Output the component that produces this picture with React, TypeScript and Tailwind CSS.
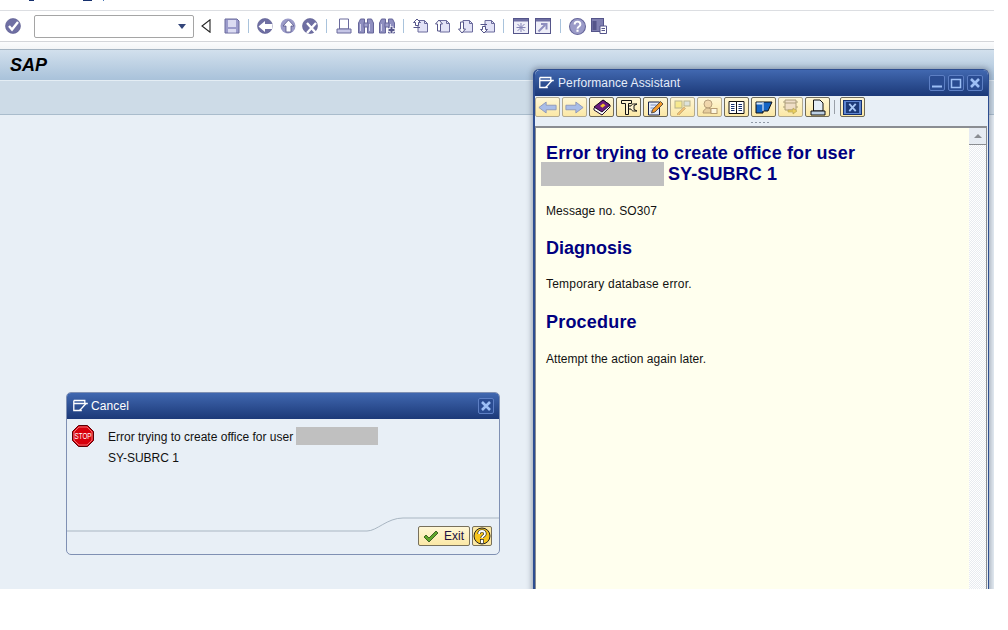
import type { ReactNode } from "react";

const Sep = ({ ml, mr }: { ml: string; mr: string }) => (
  <div className={`w-px h-[14px] bg-[#a9c3dc] ${ml} ${mr}`} />
);

// toolbar glyphs, all on a 16x16 grid
const Ico = ({ children, className = "" }: { children: ReactNode; className?: string }) => (
  <svg viewBox="0 0 16 16" className={`w-4 h-4 shrink-0 ${className}`}>{children}</svg>
);

const Disc = () => <circle cx="8" cy="8" r="7.500" fill="#6f6fa3" stroke="#5a5a8e" strokeWidth="0.600" />;

const PageShape = () => (
  <>
    <path d="M5 2.500h6.500l3 3v8.500H5z" fill="#e2e2f6" stroke="#6a6a9c" />
    <path d="M11.500 2.500v3h3" fill="none" stroke="#6a6a9c" />
  </>
);

const Binoculars = () => (
  <>
    <path d="M.5 15V5l2-4h4v14zM9.500 15V1h4l2 4v10z" fill="#8f8fc0" stroke="#66669a" />
    <rect x="6" y="5" width="4" height="4" fill="#a5a5d0" stroke="#66669a" />
    <path d="M2.500 6v7M11.500 6v7" stroke="#d8d8ee" />
  </>
);

function ArrowBtn({ flip }: { flip?: boolean }) {
  return (
    <svg viewBox="0 0 21 14" className="w-[19px] h-[13px]">
      <path
        d={flip ? "M1 4.500h11V1l8 6-8 6V9.500H1z" : "M20 4.500H9V1L1 7l8 6V9.500h11z"}
        fill="#a9bde8"
        stroke="#8c96b8"
      />
    </svg>
  );
}

const PaBtn = ({ children, dim }: { children: ReactNode; dim?: boolean }) => (
  <div
    className={`w-[25px] h-5 flex items-center justify-center rounded-[2px] border bg-gradient-to-b from-[#fff7d6] to-[#fbe8a6] ${
      dim ? "border-[#b3aa90]" : "border-[#6f6a58]"
    }`}
  >
    {children}
  </div>
);

const WinIcon = () => (
  <svg viewBox="0 0 16 14" className="w-4 h-[14px] shrink-0">
    <path d="M.8 1.500h11v3h3M.8 1.500v10h8M.8 4.500h14" fill="none" stroke="#fff" strokeWidth="1.300" />
    <path d="M6.500 11.500l2-2 4.500-5" fill="none" stroke="#fff" strokeWidth="1.300" />
  </svg>
);

const TitleBtn = ({ children }: { children: ReactNode }) => (
  <div className="w-4 h-4 rounded-[2px] border border-[#5d7fc4] bg-[#2a4c92] flex items-center justify-center">
    <svg viewBox="0 0 12 12" className="w-3 h-3">{children}</svg>
  </div>
);

const CloseMark = () => <path d="M2 2l8 8M10 2l-8 8" stroke="#9dbff5" strokeWidth="2.600" />;

function MainToolbar() {
  return (
    <div className="h-[31px] border-b border-[#d4d6da] bg-white flex items-center">
      <Ico className="ml-[5px]">
        <Disc />
        <path d="M4 8l3 3.500L13 4" fill="none" stroke="#fff" strokeWidth="2.400" />
      </Ico>
      <div className="ml-[13px] w-[160px] h-[23px] rounded-[2px] border border-[#a5a5a5] bg-white flex items-center justify-end pr-[7px]">
        <div className="w-0 h-0 border-x-[4px] border-x-transparent border-t-[5px] border-t-[#33457a]" />
      </div>
      <svg viewBox="0 0 10 14" className="ml-[7px] w-[10px] h-[14px]">
        <path d="M9 .8v12.400L1 7z" fill="#fff" stroke="#222" strokeWidth="1.100" />
      </svg>
      <Ico className="ml-[13px]">
        <path d="M1 1h12l2 2v12H1z" fill="#9c9ccc" stroke="#6a6a9c" />
        <rect x="4" y="2" width="8" height="7" fill="#dcdcf2" />
        <rect x="4" y="11" width="8" height="3.500" fill="#dcdcf2" />
      </Ico>
      <Sep ml="ml-[8px]" mr="mr-[8px]" />
      <Ico>
        <Disc />
        <path d="M1.500 8.500L8 3v3h7.500v5H8v3z" fill="#fff" />
      </Ico>
      <Ico className="ml-[7px]">
        <circle cx="8" cy="8" r="7.500" fill="#9b9bc8" />
        <path d="M8.500 2l5.500 6h-3v6H6V8H3z" fill="#fff" stroke="#55558a" strokeWidth="0.800" />
      </Ico>
      <Ico className="ml-[6px]">
        <Disc />
        <path d="M5 5l9 10M14 5L5 15" stroke="#fff" strokeWidth="2.400" />
      </Ico>
      <Sep ml="ml-[8px]" mr="mr-[9px]" />
      <Ico>
        <path d="M3.500 1h9v10h-9z" fill="#fff" stroke="#6a6a9c" />
        <path d="M1 11h14v4H1z" fill="#c6c6e6" stroke="#6a6a9c" />
      </Ico>
      <Ico className="ml-[6px]"><Binoculars /></Ico>
      <Ico className="ml-[5px]">
        <Binoculars />
        <path d="M9 12h7M12.500 8.500v7" stroke="#fff" strokeWidth="3.500" />
        <path d="M9.500 12h6M12.500 9v6" stroke="#55558a" strokeWidth="2" />
      </Ico>
      <Sep ml="ml-[8px]" mr="mr-[9px]" />
      <Ico>
        <PageShape />
        <path d="M4 1l3.500 3.500H5.500v3h-3v-3H.500zM.5 9.500h6.500" fill="#fff" stroke="#55558a" />
      </Ico>
      <Ico className="ml-[6px]">
        <PageShape />
        <path d="M4 2l3.500 4H5.500v7h-3V6H.500z" fill="#fff" stroke="#55558a" />
      </Ico>
      <Ico className="ml-[7px]">
        <PageShape />
        <path d="M4 15l3.500-4H5.500V4h-3v7H.500z" fill="#fff" stroke="#55558a" />
      </Ico>
      <Ico className="ml-[6px]">
        <PageShape />
        <path d="M4 15l3.500-3.500H5.500v-3h-3v3H.500zM.5 6.500h6.500" fill="#fff" stroke="#55558a" />
      </Ico>
      <Sep ml="ml-[7px]" mr="mr-[9px]" />
      <Ico>
        <rect x=".5" y=".5" width="15" height="15" fill="#eeeef8" stroke="#55558a" />
        <rect x="1" y="1" width="14" height="2.500" fill="#6f6fa3" />
        <path d="M8 5v9M3.500 9.500h9M4.500 6l7 7M11.500 6l-7 7" stroke="#8585b8" />
      </Ico>
      <Ico className="ml-[6px]">
        <rect x=".5" y=".5" width="15" height="15" fill="#eeeef8" stroke="#55558a" />
        <rect x="1" y="1" width="14" height="2.500" fill="#6f6fa3" />
        <path d="M3.500 13.500L10 7M6 6h5.500v5.500" fill="none" stroke="#8f8fc0" strokeWidth="2" />
      </Ico>
      <Sep ml="ml-[9px]" mr="mr-[8px]" />
      <Ico className="w-[17px] h-[17px]">
        <circle cx="8" cy="8" r="7.500" fill="#9b9bc8" stroke="#66669a" />
        <path d="M5.300 6c0-3.500 5.400-3.500 5.400 0 0 2-2.700 2-2.700 4" fill="none" stroke="#fff" strokeWidth="1.800" />
        <rect x="7" y="11" width="2" height="2" fill="#fff" />
      </Ico>
      <Ico className="ml-[5px]">
        <rect x=".5" y=".5" width="12" height="13" fill="#7f7fb0" stroke="#55558a" />
        <rect x="1.500" y="3" width="4" height="9" fill="#55558a" />
        <path d="M9 8h6.500v7.500H9z" fill="#fff" stroke="#55558a" />
        <path d="M10.500 10.500h3.500M10.500 12.500h3.500" stroke="#55558a" />
      </Ico>
    </div>
  );
}

function PaToolbar() {
  return (
    <div className="h-[30px] bg-[#e8eff6] relative pt-px flex items-start gap-[2px]">
      <PaBtn dim><ArrowBtn /></PaBtn>
      <PaBtn dim><ArrowBtn flip /></PaBtn>
      <PaBtn>
        <svg viewBox="0 0 18 17" className="w-[18px] h-[17px]">
          <path d="M1 9l9-8 7 5v2l-8 8-8-5z" fill="#fff" stroke="#1c0a26" />
          <path d="M1 8l9-7 7 5-8 7z" fill="#6a1b7d" stroke="#1c0a26" />
          <path d="M7 7l3-2.500 2.500 1.800-3 2.500z" fill="#f2c230" />
        </svg>
      </PaBtn>
      <PaBtn>
        <svg viewBox="0 0 18 17" className="w-[18px] h-[17px]">
          <path d="M1.500 1.500h10v3H8.500v11h-3v-11h-4z" fill="#fff3cf" stroke="#111" />
          <path d="M17 5h-3.500c-1.500 0-2 1-2.500 2H8.500v3H11c.5 1 1 2 2.500 2H17l-3-1.500v-4z" fill="#fff3cf" stroke="#111" />
        </svg>
      </PaBtn>
      <PaBtn>
        <svg viewBox="0 0 17 17" className="w-[17px] h-[17px]">
          <path d="M1.500 3h11v13h-11z" fill="#e6edf8" stroke="#16204a" />
          <path d="M3.500 6h6M3.500 9h4M3.500 12h2" stroke="#7a8cc0" />
          <path d="M4.500 14l1.200-3.500L13.500 2.500l2.500 2.500-8 8z" fill="#f39a2a" stroke="#333" strokeWidth="0.800" />
        </svg>
      </PaBtn>
      <PaBtn dim>
        <svg viewBox="0 0 17 15" className="w-[17px] h-[15px] opacity-60">
          <rect x="1" y="1" width="7" height="7" fill="#f4e46a" stroke="#8a8a6a" />
          <rect x="10" y="1" width="6" height="5" fill="#c8d8e8" stroke="#8a8a6a" />
          <path d="M3 14l7-7 1.500 1.500-7 7z" fill="#e8a04a" stroke="#8a6a3a" strokeWidth="0.600" />
        </svg>
      </PaBtn>
      <PaBtn dim>
        <svg viewBox="0 0 17 16" className="w-[17px] h-4 opacity-60">
          <circle cx="7" cy="5" r="4" fill="#e8c59a" stroke="#8a6a4a" />
          <path d="M2 14c0-3 3-5 5-5l3 1v4H2z" fill="#d9b98f" stroke="#8a6a4a" />
          <rect x="10" y="9.500" width="6" height="5" fill="#fff" stroke="#8a6a4a" />
        </svg>
      </PaBtn>
      <PaBtn>
        <svg viewBox="0 0 17 14" className="w-[17px] h-[14px]">
          <path d="M1 1.500h7.500v12H1zM8.500 1.500H16v12H8.500z" fill="#fff" stroke="#111" />
          <path d="M3 4.500h3.500M3 6.500h3.500M3 8.500h3.500M3 10.500h3.500M10.500 4.500H14M10.500 6.500H14M10.500 8.500H14M10.500 10.500H14" stroke="#16306e" />
        </svg>
      </PaBtn>
      <PaBtn>
        <svg viewBox="0 0 18 13" className="w-[18px] h-[13px]">
          <path d="M1 1h16l-4 9H8v2H1z" fill="#1665c4" stroke="#111" />
          <path d="M8 1v9" stroke="#fff" />
          <path d="M1.500 1.500h6v2h-6z" fill="#d8e8f8" />
        </svg>
      </PaBtn>
      <PaBtn dim>
        <svg viewBox="0 0 17 16" className="w-[17px] h-4 opacity-70">
          <path d="M1 3h2M14 3h2M1 8h2M14 8h2" stroke="#8a7a5a" />
          <path d="M3 1h11v10H3z" fill="#ead6c8" stroke="#8a7a5a" />
          <path d="M3 4h11" stroke="#8a7a5a" />
          <path d="M6 11h5V9l4 3-4 3v-2H6z" fill="#e6c43a" stroke="#8a7a2a" strokeWidth="0.600" />
        </svg>
      </PaBtn>
      <PaBtn>
        <svg viewBox="0 0 16 17" className="w-4 h-[17px]">
          <path d="M3.500 1h6.500l3 3v8h-9.500z" fill="#e4edf8" stroke="#111" />
          <path d="M1 12h14v4H1z" fill="#bcd0e4" stroke="#111" />
        </svg>
      </PaBtn>
      <div className="w-px h-[14px] bg-[#9aa0a8] mt-[3px] ml-[2px] mr-[3px]" />
      <PaBtn>
        <div className="w-[19px] h-[15px] bg-[#5f86d0] border border-[#16306e] flex items-center justify-center">
          <div className="w-[13px] h-[11px] bg-[#1d3a78] flex items-center justify-center">
            <svg viewBox="0 0 12 12" className="w-[11px] h-[11px]">
              <path d="M2.500 2l7 8M9.500 2l-7 8" stroke="#a9c8f5" strokeWidth="2" />
            </svg>
          </div>
        </div>
      </PaBtn>
      <div className="absolute left-[215px] top-[25px] w-5 h-[3px] bg-[radial-gradient(#8f99a5_1px,transparent_1px)] bg-[length:4px_3px]" />
    </div>
  );
}

export default function App() {
  return (
    <div className="w-[994px] h-[589px] relative overflow-hidden bg-[#e8eff6] font-['Liberation_Sans',Arial,sans-serif] text-xs text-[#111]">
      {/* menu bar is cut off at the top of the picture */}
      <div className="h-[11px] bg-white border-b border-[#dcdee2] flex">
        <div className="ml-[29px] w-[5px] h-px bg-[#16306e]" />
        <div className="ml-[49px] w-[9px] h-px bg-[#16306e]" />
        <div className="ml-[11px] w-px h-px bg-[#4a78b8]" />
      </div>
      <MainToolbar />
      <div className="h-[8px] bg-gradient-to-b from-[#fbfcfd] to-[#f3f5f7] border-b border-[#a5b4c2]" />
      <div className="h-[31px] bg-gradient-to-b from-[#d2e0ed] to-[#a9c2da] border-b border-[#e4edf4] flex items-center pl-[10px]">
        <span className="text-[18px] font-bold italic text-black">SAP</span>
      </div>
      <div className="h-[34px] bg-[#cddbe7] border-b border-[#a9bccc]" />

      {/* Cancel dialog */}
      <div className="absolute left-[66px] top-[392px] w-[434px] h-[163px] rounded-[5px] border border-[#7f90b3] bg-[#e8eff6] overflow-hidden">
        <div className="h-[26px] bg-gradient-to-b from-[#4168b0] to-[#1c3978] flex items-center pl-[6px] pr-[5px] text-white text-[12px]">
          <WinIcon />
          <span className="ml-[2px] tracking-[0.1px]">Cancel</span>
          <div className="ml-auto"><TitleBtn><CloseMark /></TitleBtn></div>
        </div>
        <div className="flex pl-[5px] pt-[8px]">
          <svg viewBox="0 0 22 22" className="w-[22px] h-[22px] shrink-0 -mt-[2px]">
            <path d="M6.500 .5h9l6 6v9l-6 6h-9l-6-6v-9z" fill="#d8000c" stroke="#5a0006" />
            <path d="M7 2h8l5 5v8l-5 5H7l-5-5V7z" fill="none" stroke="#f7a0a0" strokeWidth="0.700" />
            <text x="11" y="14" textAnchor="middle" fontSize="8.500" textLength="17" lengthAdjust="spacingAndGlyphs" fill="#fff" fontFamily="Liberation Sans">STOP</text>
          </svg>
          <div className="ml-[14px]">
            <div className="flex items-start h-[18px]">
              <span className="mt-[3px] leading-[14px]">Error trying to create office for user</span>
              <div className="ml-[3px] w-[82px] h-[18px] bg-[#c0c0c0]" />
            </div>
            <div className="mt-[4px] leading-[18px]">SY-SUBRC 1</div>
          </div>
        </div>
        <svg viewBox="0 0 432 20" className="absolute left-0 top-[123px] w-[432px] h-5">
          <path d="M0 15h300c10 0 20-13 36-13h96" fill="none" stroke="#a9b6c2" />
        </svg>
        <div className="absolute left-[351px] top-[133px] flex gap-[2px]">
          <div className="w-[52px] h-5 flex items-center rounded-[2px] border border-[#77705c] bg-gradient-to-b from-[#fff7d6] to-[#fbe8a6] pl-[4px]">
            <svg viewBox="0 0 16 13" className="w-4 h-[13px]">
              <path d="M1 7l2-2 3 3 7-7 2 2-9 9z" fill="#5fa62a" stroke="#234a10" strokeWidth="0.800" />
            </svg>
            <span className="ml-[5px] text-[#201040]">Exit</span>
          </div>
          <div className="w-5 h-5 flex items-center justify-center rounded-[2px] border border-[#77705c] bg-[#fbe8a6]">
            <svg viewBox="0 0 18 18" className="w-[18px] h-[18px]">
              <circle cx="9" cy="9" r="8" fill="#f7c51e" stroke="#222" />
              <path d="M6 7c0-4 6-4 6 0 0 2-3 2-3 4" fill="none" stroke="#222" strokeWidth="3.200" />
              <path d="M6 7c0-4 6-4 6 0 0 2-3 2-3 4" fill="none" stroke="#fff" strokeWidth="1.800" />
              <rect x="7.500" y="12.500" width="3" height="4" fill="#fff" stroke="#222" strokeWidth="0.700" />
            </svg>
          </div>
        </div>
      </div>

      {/* Performance Assistant window */}
      <div className="absolute left-[533px] top-[69px] w-[456px] h-[540px] rounded-t-[6px] border-l-2 border-r border-t border-[#2d4d90] bg-[#e8eff6] flex flex-col shadow-[0_0_5px_2px_rgba(90,100,120,0.45)]">
        <div className="h-[26px] shrink-0 rounded-t-[5px] bg-gradient-to-b from-[#4168b0] to-[#1c3978] flex items-center px-[4px] pr-[5px] text-white text-[12px]">
          <WinIcon />
          <span className="ml-[3px] tracking-[0.1px] text-[#e4ecfa]">Performance Assistant</span>
          <div className="ml-auto flex gap-[3px]">
            <TitleBtn><path d="M1 9.500h10" stroke="#9dbff5" strokeWidth="2" /></TitleBtn>
            <TitleBtn><path d="M1.500 2.500h9v8h-9z" fill="none" stroke="#9dbff5" strokeWidth="1.500" /></TitleBtn>
            <TitleBtn><CloseMark /></TitleBtn>
          </div>
        </div>
        <PaToolbar />
        <div className="flex-1 flex border-t-2 border-l border-[#8a8d92] bg-[#ffffee] mr-px">
          <div className="flex-1 pl-[10px] pt-[15px]">
            <h1 className="text-[18px] leading-[20px] tracking-[0.13px] font-bold text-[#000080]">Error trying to create office for user</h1>
            <div className="flex items-center h-[21px]">
              <div className="-ml-[5px] w-[123px] h-[24px] bg-[#c0c0c0]" />
              <span className="ml-[4px] text-[18px] font-bold tracking-[0.1px] text-[#000080]">SY-SUBRC 1</span>
            </div>
            <p className="mt-[20px] leading-[14px] tracking-[0.1px]">Message no. SO307</p>
            <h2 className="mt-[20px] text-[18px] leading-[21px] font-bold text-[#000080]">Diagnosis</h2>
            <p className="mt-[18px] leading-[14px] tracking-[0.2px]">Temporary database error.</p>
            <h2 className="mt-[21px] text-[18px] leading-[21px] tracking-[0.2px] font-bold text-[#000080]">Procedure</h2>
            <p className="mt-[19px] leading-[14px] tracking-[0.04px]">Attempt the action again later.</p>
          </div>
          <div className="w-[18px] shrink-0 border-r border-[#8a8d92] bg-[#f3f5f8] bg-[conic-gradient(#fff_25%,#e8ebf0_0_50%,#fff_0_75%,#e8ebf0_0)] bg-[length:2px_2px]">
            <div className="h-[17px] bg-[#e6ebf2] border-b border-[#8a8d92] flex items-center justify-center">
              <div className="w-0 h-0 border-x-[4px] border-x-transparent border-b-[4px] border-b-[#8a8d92]" />
            </div>
          </div>
        </div>
      </div>
    </div>
  );
}
